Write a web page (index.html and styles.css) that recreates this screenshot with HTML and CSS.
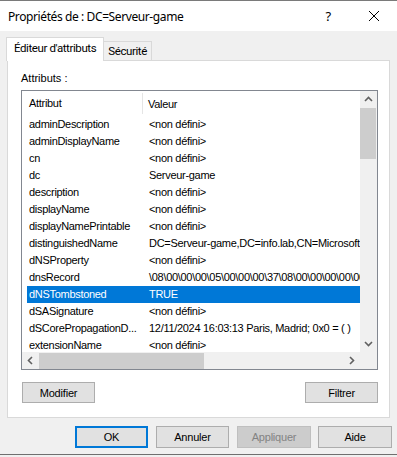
FILE: index.html
```html
<!DOCTYPE html>
<html lang="fr">
<head>
    <meta charset="UTF-8">
    <title>Propriétés de : DC=Serveur-game</title>
    <link rel="stylesheet" href="styles.css">
</head>
<body>
<div class="window">
    <div class="titlebar">
        <span class="title">Propriétés de : DC=Serveur-game</span>
        <span class="caption-btn help">?</span>
        <span class="caption-btn close">
            <svg width="12" height="12" viewBox="0 0 12 12"><path d="M1 1 L11 11 M11 1 L1 11" stroke="#000" stroke-width="1" fill="none"/></svg>
        </span>
    </div>

    <div class="tabs">
        <div class="tab active">Éditeur d'attributs</div>
        <div class="tab">Sécurité</div>
    </div>

    <div class="panel">
        <div class="label">Attributs :</div>
        <div class="listbox">
            <div class="viewport">
                <div class="header">
                    <div class="head-attr">Attribut</div>
                    <div class="head-val">Valeur</div>
                </div>
                <div class="row"><span class="attr">adminDescription</span><span class="val">&lt;non défini&gt;</span></div>
                <div class="row"><span class="attr">adminDisplayName</span><span class="val">&lt;non défini&gt;</span></div>
                <div class="row"><span class="attr">cn</span><span class="val">&lt;non défini&gt;</span></div>
                <div class="row"><span class="attr">dc</span><span class="val">Serveur-game</span></div>
                <div class="row"><span class="attr">description</span><span class="val">&lt;non défini&gt;</span></div>
                <div class="row"><span class="attr">displayName</span><span class="val">&lt;non défini&gt;</span></div>
                <div class="row"><span class="attr">displayNamePrintable</span><span class="val">&lt;non défini&gt;</span></div>
                <div class="row"><span class="attr">distinguishedName</span><span class="val">DC=Serveur-game,DC=info.lab,CN=MicrosoftDNS,DC=DomainDnsZones,DC=info,DC=lab</span></div>
                <div class="row"><span class="attr">dNSProperty</span><span class="val">&lt;non défini&gt;</span></div>
                <div class="row"><span class="attr">dnsRecord</span><span class="val">\08\00\00\00\05\00\00\00\37\08\00\00\00\00\00\00\00\00\00\00</span></div>
                <div class="row selected"><span class="attr">dNSTombstoned</span><span class="val">TRUE</span></div>
                <div class="row"><span class="attr">dSASignature</span><span class="val">&lt;non défini&gt;</span></div>
                <div class="row"><span class="attr">dSCorePropagationD...</span><span class="val">12/11/2024 16:03:13 Paris, Madrid; 0x0 = ( )</span></div>
                <div class="row"><span class="attr">extensionName</span><span class="val">&lt;non défini&gt;</span></div>
            </div>
            <div class="vscroll">
                <div class="arrow"><svg width="9" height="9" viewBox="0 0 9 9"><path d="M1 6 L4.5 2.5 L8 6" stroke="#606060" stroke-width="1.6" fill="none"/></svg></div>
                <div class="vthumb"></div>
                <div class="vtrack"></div>
                <div class="arrow"><svg width="9" height="9" viewBox="0 0 9 9"><path d="M1 3 L4.5 6.5 L8 3" stroke="#606060" stroke-width="1.6" fill="none"/></svg></div>
            </div>
            <div class="hscroll">
                <div class="arrow"><svg width="9" height="9" viewBox="0 0 9 9"><path d="M6 1 L2.5 4.5 L6 8" stroke="#606060" stroke-width="1.6" fill="none"/></svg></div>
                <div class="hthumb"></div>
                <div class="htrack"></div>
                <div class="arrow"><svg width="9" height="9" viewBox="0 0 9 9"><path d="M3 1 L6.5 4.5 L3 8" stroke="#606060" stroke-width="1.6" fill="none"/></svg></div>
            </div>
            <div class="corner"></div>
        </div>
        <div class="panel-buttons">
            <button class="btn">Modifier</button>
            <button class="btn">Filtrer</button>
        </div>
    </div>

    <div class="dialog-buttons">
        <button class="btn default w73">OK</button>
        <button class="btn w73">Annuler</button>
        <button class="btn disabled w74">Appliquer</button>
        <button class="btn w74">Aide</button>
    </div>
    <div class="bottom-line"></div>
</div>
</body>
</html>
```

FILE: styles.css
```css
body {
    margin: 0;
    background-color: #f0f0f0;
    font-family: "Liberation Sans", Arial, sans-serif;
    font-size: 11px;
    color: #000000;
}
.window {
    width: 397px;
    height: 457px;
    border-top: 1px solid #7a7a7a;
    box-sizing: border-box;
    overflow: hidden;
}

/* title bar */
.titlebar {
    height: 30px;
    background-color: #ffffff;
    display: flex;
    align-items: center;
    padding-left: 8px;
    font-family: "Noto Sans", sans-serif;
    font-size: 12px;
    letter-spacing: -0.4px;
}
.title {
    flex: 1;
}
.caption-btn {
    width: 46px;
    height: 30px;
    display: flex;
    align-items: center;
    justify-content: center;
}
.help {
    font-size: 13px;
}

/* tabs */
.tabs {
    display: flex;
    align-items: flex-end;
    height: 23px;
    margin: 6px 0 0 6px;
    position: relative;
    z-index: 1;
    font-family: Roboto, sans-serif;
    font-size: 11.5px;
    letter-spacing: -0.4px;
}
.tab {
    box-sizing: border-box;
    height: 19px;
    line-height: 18px;
    padding: 0 4px;
    border: 1px solid #d9d9d9;
    border-bottom: none;
    border-left: none;
    background-color: #f0f0f0;
}
.tab.active {
    height: 24px;
    line-height: 21px;
    margin-bottom: -1px;
    padding: 0 7px;
    border-left: 1px solid #d9d9d9;
    background-color: #ffffff;
}

/* tab page */
.panel {
    box-sizing: border-box;
    height: 358px;
    margin: 0 7px;
    padding: 11px 0 0 13px;
    border: 1px solid #d9d9d9;
    background-color: #ffffff;
}
.label {
    line-height: 13px;
}
.listbox {
    box-sizing: border-box;
    width: 357px;
    height: 280px;
    margin-top: 5px;
    border: 1px solid #828790;
    display: grid;
    grid-template-columns: 338px 17px;
    grid-template-rows: 261px 17px;
    letter-spacing: -0.3px;
}
.viewport {
    overflow: hidden;
    background-color: #ffffff;
}
.header {
    display: flex;
    height: 25px;
    align-items: center;
}
.head-attr {
    box-sizing: border-box;
    width: 121px;
    padding-left: 7px;
    line-height: 21px;
    border-right: 1px solid #e5e5e5;
}
.head-val {
    padding-left: 5px;
}
.row {
    display: flex;
    width: 600px;
    height: 17px;
    line-height: 17px;
    margin-left: 5px;
    white-space: nowrap;
}
.row.selected {
    background-color: #0078d7;
    color: #ffffff;
}
.attr {
    box-sizing: border-box;
    width: 116px;
    padding-left: 2px;
    overflow: hidden;
}
.val {
    padding-left: 6px;
}

/* scroll bars */
.vscroll, .hscroll {
    display: flex;
    background-color: #f0f0f0;
}
.vscroll {
    flex-direction: column;
}
.arrow {
    width: 17px;
    height: 17px;
    display: flex;
    align-items: center;
    justify-content: center;
}
.vthumb {
    height: 51px;
    margin: 0 1px 0 0;
    background-color: #cdcdcd;
}
.vtrack, .htrack {
    flex: 1;
}
.hthumb {
    width: 165px;
    margin: 1px 0 0 0;
    background-color: #cdcdcd;
}
.corner {
    background-color: #f0f0f0;
}

/* buttons */
.btn {
    box-sizing: border-box;
    height: 21px;
    width: 73px;
    padding: 0;
    font-family: "Liberation Sans", Arial, sans-serif;
    font-size: 11px;
    letter-spacing: -0.2px;
    color: #000000;
    background-color: #e1e1e1;
    border: 1px solid #adadad;
}
.panel-buttons {
    display: flex;
    justify-content: space-between;
    width: 356px;
    margin: 12px 0 0 1px;
}
.dialog-buttons {
    display: flex;
    justify-content: flex-end;
    gap: 8px;
    margin-top: 8px;
    padding-right: 5px;
}
.dialog-buttons .btn {
    height: 22px;
}
.w74 {
    width: 74px;
}
.btn.default {
    border: 2px solid #0078d7;
}
.btn.disabled {
    background-color: #cccccc;
    border-color: #bfbfbf;
    color: #838383;
}
.btn.disabled + .btn {
    margin-left: -1px;
}
.bottom-line {
    height: 1px;
    margin-top: 6px;
    background-color: #6f6f6f;
}
```
